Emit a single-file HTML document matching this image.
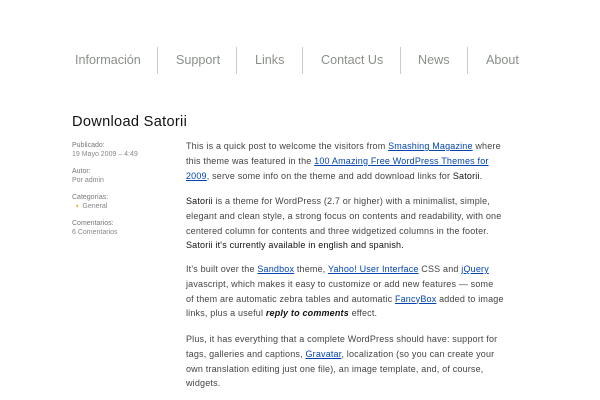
<!DOCTYPE html>
<html><head><meta charset="utf-8"><style>
body{margin:0;width:600px;height:400px;overflow:hidden;background:#fff;font-family:"Liberation Sans","DejaVu Sans",sans-serif;position:relative}
.n{position:absolute;top:53px;font-size:12.6px;color:#8a908a;white-space:nowrap}
.s{position:absolute;top:47px;width:1px;height:27px;background:#c8ccc8}
h1{position:absolute;left:72px;top:114px;margin:0;font-weight:normal;font-size:14.6px;color:#111;letter-spacing:0.3px}
.side{position:absolute;left:72px;font-size:7px;color:#888;line-height:9px}
.side b{font-weight:normal;color:#777}
.p{position:absolute;left:186px;font-size:9px;color:#444;line-height:14.8px;white-space:nowrap;letter-spacing:0.18px}
.p a{color:#0645ad;text-decoration:underline}
.k{color:#111}
</style></head><body>
<div class="n" style="left:75px">Información</div>
<div class="s" style="left:157px"></div>
<div class="n" style="left:176px">Support</div>
<div class="s" style="left:236px"></div>
<div class="n" style="left:255px">Links</div>
<div class="s" style="left:302px"></div>
<div class="n" style="left:321px">Contact Us</div>
<div class="s" style="left:400px"></div>
<div class="n" style="left:418px">News</div>
<div class="s" style="left:467px"></div>
<div class="n" style="left:486px">About</div>

<h1>Download Satorii</h1>
<div class="side" style="top:141px"><b>Publicado:</b><br>19 Mayo 2009 – 4:49</div>
<div class="side" style="top:167px"><b>Autor:</b><br>Por admin</div>
<div class="side" style="top:193px"><b>Categorías:</b><br><span style="color:#e0a000;padding-left:4px">▪</span> &nbsp;General</div>
<div class="side" style="top:219px"><b>Comentarios:</b><br>6 Comentarios</div>

<div class="p" style="top:139px">This is a quick post to welcome the visitors from <a>Smashing Magazine</a> where<br>this theme was featured in the <a>100 Amazing Free WordPress Themes for</a><br><a>2009</a>, serve some info on the theme and add download links for <span class="k">Satorii</span>.</div>
<div class="p" style="top:194px"><span class="k">Satorii</span> is a theme for WordPress (2.7 or higher) with a minimalist, simple,<br>elegant and clean style, a strong focus on contents and readability, with one<br>centered column for contents and three widgetized columns in the footer.<br><span class="k">Satorii it's currently available in english and spanish.</span></div>
<div class="p" style="top:262px">It's built over the <a>Sandbox</a> theme, <a>Yahoo! User Interface</a> CSS and <a>jQuery</a><br>javascript, which makes it easy to customize or add new features — some<br>of them are automatic zebra tables and automatic <a>FancyBox</a> added to image<br>links, plus a useful <i class="k"><b>reply to comments</b></i> effect.</div>
<div class="p" style="top:332px">Plus, it has everything that a complete WordPress should have: support for<br>tags, galleries and captions, <a>Gravatar</a>, localization (so you can create your<br>own translation editing just one file), an image template, and, of course,<br>widgets.</div>
</body></html>
